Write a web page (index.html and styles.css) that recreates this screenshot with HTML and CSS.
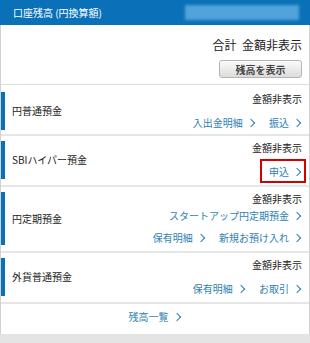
FILE: index.html
```html
<!DOCTYPE html>
<html lang="ja">
<head>
    <meta charset="UTF-8">
    <meta name="viewport" content="width=device-width, initial-scale=1.0">
    <title>口座残高</title>
    <link rel="stylesheet" href="styles.css">
</head>
<body>
    <div class="panel">
        <div class="panel-head">
            <span>口座残高 (円換算額)</span>
            <div class="head-blur"></div>
        </div>
        <div class="panel-body">
            <div class="total">
                <div class="total-text">合計&nbsp;&nbsp;金額非表示</div>
                <button class="btn-show">残高を表示</button>
            </div>

            <div class="acct acct-first">
                <div class="acct-inner">
                    <div class="acct-name">円普通預金</div>
                    <div class="acct-right">
                        <div class="amount">金額非表示</div>
                        <div class="links">
                            <a class="lnk">入出金明細</a>
                            <a class="lnk">振込</a>
                        </div>
                    </div>
                </div>
            </div>

            <div class="acct">
                <div class="acct-inner">
                    <div class="acct-name">SBIハイパー預金</div>
                    <div class="acct-right">
                        <div class="amount">金額非表示</div>
                        <div class="links">
                            <a class="lnk mark">申込</a>
                        </div>
                    </div>
                </div>
            </div>

            <div class="acct">
                <div class="acct-inner">
                    <div class="acct-name">円定期預金</div>
                    <div class="acct-right">
                        <div class="amount">金額非表示</div>
                        <div class="links links-mid">
                            <a class="lnk">スタートアップ円定期預金</a>
                        </div>
                        <div class="links links-last">
                            <a class="lnk">保有明細</a>
                            <a class="lnk">新規お預け入れ</a>
                        </div>
                    </div>
                </div>
            </div>

            <div class="acct">
                <div class="acct-inner">
                    <div class="acct-name">外貨普通預金</div>
                    <div class="acct-right">
                        <div class="amount">金額非表示</div>
                        <div class="links">
                            <a class="lnk">保有明細</a>
                            <a class="lnk">お取引</a>
                        </div>
                    </div>
                </div>
            </div>

            <div class="more">
                <a class="lnk">残高一覧</a>
            </div>
        </div>
    </div>
</body>
</html>
```

FILE: styles.css
```css
body {
    margin: 0;
    padding: 0;
    background-color: #e4e4e4;
    font-family: "Noto Sans CJK JP", "Liberation Sans", sans-serif;
    font-size: 10px;
    color: #222;
}
.panel {
    width: 310px;
    background: white;
    box-shadow: 0px 2px 3px rgba(0, 0, 0, 0.18);
}
.panel-head {
    height: 25px;
    background-color: #0a71b8;
    color: white;
    display: flex;
    align-items: center;
    justify-content: space-between;
    padding: 0 11px 0 13px;
    font-size: 10px;
}
.head-blur {
    width: 114px;
    height: 15px;
    background-color: #52a3db;
    filter: blur(1.5px);
}
.panel-body {
    border-left: 1px solid #d2d2d2;
    border-right: 1px solid #d2d2d2;
}
.total {
    text-align: right;
    padding: 12px 7px 6px 0;
    border-bottom: 1px solid #dcdcdc;
}
.total-text {
    font-size: 12px;
    line-height: 16px;
}
.btn-show {
    margin-top: 7px;
    width: 83px;
    height: 18px;
    border: 1px solid #b4b4b4;
    border-radius: 3px;
    background: linear-gradient(#fbfbfb, #dcdcdc);
    font-family: inherit;
    font-size: 10px;
    font-weight: bold;
    color: #444;
    padding: 0;
    line-height: 15px;
}
.acct {
    padding: 5px 0 6px;
    border-bottom: 2px solid #e6e6e6;
}
.acct-first {
    padding: 7px 0 4px;
}
.acct-inner {
    display: flex;
    align-items: center;
    justify-content: space-between;
    border-left: 4px solid #0a71b8;
    padding: 0 7px 0 7px;
}
.acct-name {
    line-height: 14px;
}
.acct-right {
    text-align: right;
}
.amount {
    line-height: 14px;
}
.links {
    margin-top: 10px;
    line-height: 14px;
}
.links-mid {
    margin-top: 3px;
}
.links-last {
    margin-top: 8px;
}
.lnk {
    color: #2f7fb3;
    position: relative;
    margin-left: 11px;
}
.lnk::after {
    content: "";
    display: inline-block;
    width: 5px;
    height: 5px;
    border-top: 1px solid #2f7fb3;
    border-right: 1px solid #2f7fb3;
    transform: rotate(45deg);
    margin-left: 5px;
    margin-right: 2px;
    vertical-align: 1px;
}
.mark::before {
    content: "";
    position: absolute;
    left: -9px;
    right: -4px;
    top: -5px;
    bottom: -4px;
    border: 2px solid #d30000;
}
.more {
    text-align: center;
    padding: 6px 0 10px;
    line-height: 14px;
}
.more .lnk {
    margin-left: 0;
}
```
